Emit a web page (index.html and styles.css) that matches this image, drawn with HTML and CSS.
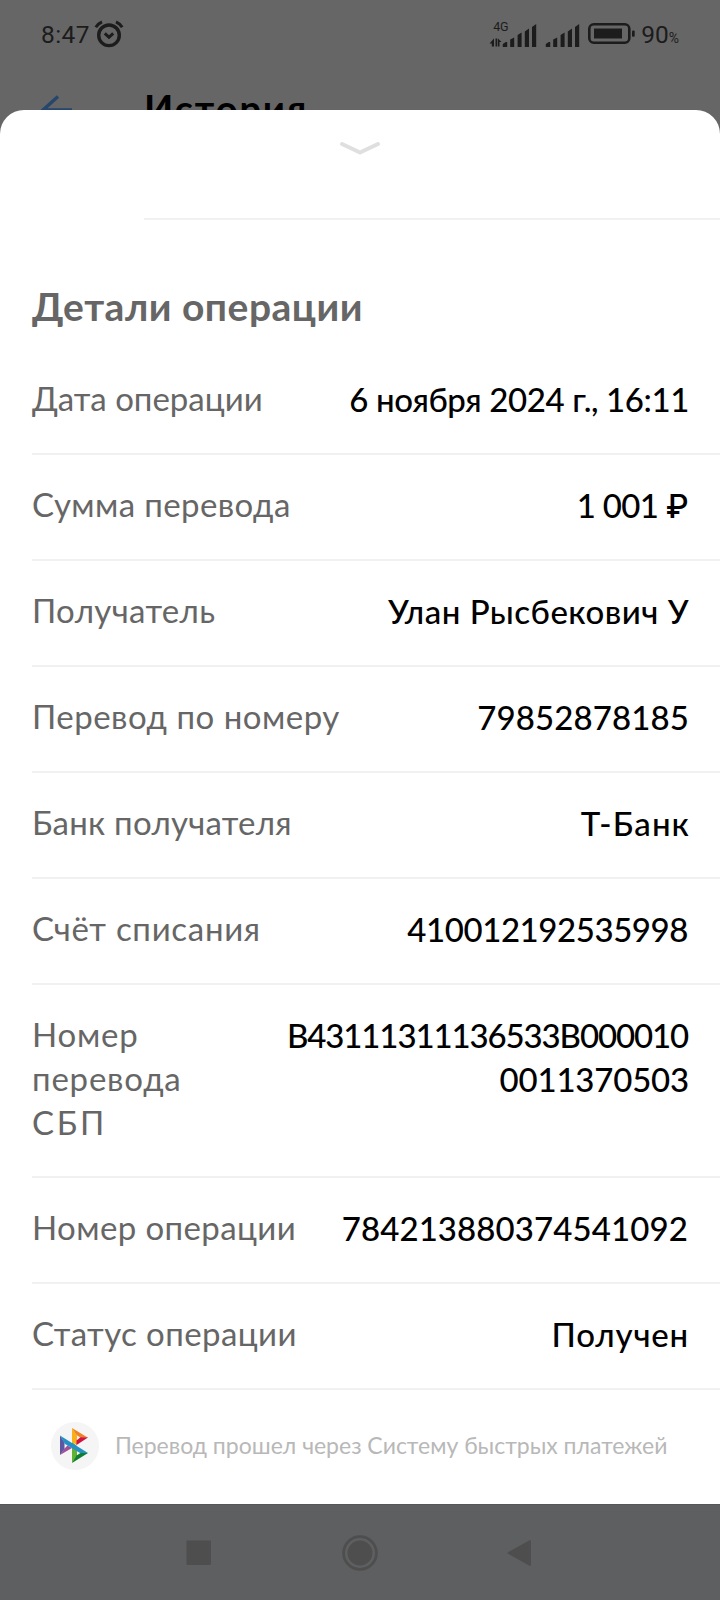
FILE: index.html
```html
<!DOCTYPE html>
<html lang="ru">
<head>
<meta charset="utf-8">
<title>История</title>
<link rel="stylesheet" href="styles.css">
</head>
<body>
<div class="screen">
  <header class="status">
    <span class="clock">8:47</span>
    <svg class="alarm" width="30" height="28" viewBox="0 0 30 28" fill="none" stroke="#1c1c1c" stroke-width="3.400">
      <circle cx="15" cy="15.300" r="10.300"/>
      <path d="M10.800 13.300l4.200 4 4.200-4" stroke-width="3"/>
      <path d="M1.800 7.200C3.400 4.600 5.400 2.900 8 1.800M28.200 7.200C26.600 4.600 24.600 2.900 22 1.800" stroke-width="3"/>
    </svg>
    <span class="network">
      <span class="net">4G</span>
      <svg width="94" height="11" viewBox="0 12.500 94 11" fill="#1c1c1c" overflow="visible">
        <path d="M5 15v8H2.800v-3H.5zM6.500 15h1.800v8H6.500zM9 15l3.500 3.500h-2V23H9z"/>
        <path d="M13.800 23.500v-3l3-2h1.400v5zM21.200 23.500v-7.500l4-2v9.500zM28.600 23.500v-12l4-2.500v14.500zM35.800 23.500v-15.500l4.200-3v18.500zM43 23.500V3.500l4.200-3v23z"/>
        <path transform="translate(43 0)" d="M13.800 23.500v-3l3-2h1.400v5zM21.200 23.500v-7.500l4-2v9.500zM28.600 23.500v-12l4-2.500v14.500zM35.800 23.500v-15.500l4.200-3v18.500zM43 23.500V3.500l4.200-3v23z"/>
      </svg>
    </span>
    <svg class="battery" width="47" height="21" viewBox="0 0 47 21">
      <rect x="1.300" y="1.300" width="40" height="18.400" rx="4.500" fill="none" stroke="#1c1c1c" stroke-width="2.600"/>
      <rect x="6" y="5.500" width="28" height="10" fill="#1c1c1c"/>
      <rect x="44" y="7.400" width="2.700" height="6.400" rx="1" fill="#1c1c1c"/>
    </svg>
    <span class="charge">90<small>%</small></span>
  </header>
  <div class="topbar">
    <svg class="back" width="31" height="30" viewBox="0 0 31 30" fill="none" stroke="#26466c" stroke-width="3.400"><path d="M17 1.500L2 15l15 13.500M2 15h29"/></svg>
    <h1 class="title">История</h1>
  </div>
  <main class="sheet">
    <svg class="grip" width="42" height="15" viewBox="0 0 42 15" fill="none" stroke="#dfdfdf" stroke-width="4" stroke-linecap="round" stroke-linejoin="round"><path d="M3 3l18 8.500L39 3"/></svg>
    <hr class="rule">
    <h2 class="heading">Детали операции</h2>
    <dl class="list">
      <div class="row date"><dt>Дата операции</dt><dd>6 ноября 2024 г., 16:11</dd></div>
      <div class="row amount"><dt>Сумма перевода</dt><dd>1 001 <span class="ruble">₽</span></dd></div>
      <div class="row payee"><dt>Получатель</dt><dd>Улан Рысбекович У</dd></div>
      <div class="row phone"><dt>Перевод по номеру</dt><dd>79852878185</dd></div>
      <div class="row bank"><dt>Банк получателя</dt><dd>Т-Банк</dd></div>
      <div class="row account"><dt>Счёт списания</dt><dd>410012192535998</dd></div>
      <div class="row sbp"><dt>Номер перевода <span class="abbr">СБП</span></dt><dd><span class="part">B43111311136533B000010</span><span class="rest">0011370503</span></dd></div>
      <div class="row number"><dt>Номер операции</dt><dd>784213880374541092</dd></div>
      <div class="row state"><dt>Статус операции</dt><dd>Получен</dd></div>
    </dl>
    <footer class="note">
      <svg width="48" height="48" viewBox="0 0 48 48">
        <circle cx="24" cy="24" r="24" fill="#f5f5f5"/>
        <path fill="#5b57a2" d="M9 13.500l4.500 7V27L9 33z"/>
        <path fill="#a0509b" d="M9 33l4.500-6.500 3-3L21 26z"/>
        <path fill="#faaf19" d="M21 6l5 7.500V23l-5-3z"/>
        <path fill="#f08228" d="M21 6l16 9.800h-7.500L25.500 13z"/>
        <path fill="#d21341" d="M37 15.500l-11.500 7.500v-4.500l4-3.200z"/>
        <path fill="#63b22f" d="M21 20l5 4v9.500L21 41z"/>
        <path fill="#0f7e30" d="M21 41l16-10h-7.500l-4 2.500z"/>
        <path fill="#2690c4" d="M9 13.500L37 31h-8L14 22z"/>
      </svg>
      <p>Перевод прошел через Систему быстрых платежей</p>
    </footer>
  </main>
  <nav class="nav">
    <svg width="26" height="26" viewBox="0 0 26 26"><rect x=".5" y=".5" width="24.500" height="24.500" rx="1" fill="#4e4e4e"/></svg>
    <svg width="36" height="36" viewBox="0 0 36 36" fill="#4e4e4e"><circle cx="18" cy="18" r="16.400" fill="none" stroke="#4e4e4e" stroke-width="2.800"/><circle cx="18" cy="18" r="12.500"/></svg>
    <svg width="25" height="28" viewBox="0 0 25 28"><path d="M1.500 14L23 2v24z" fill="#4e4e4e" stroke="#4e4e4e" stroke-width="2" stroke-linejoin="round"/></svg>
  </nav>
</div>
</body>
</html>
```
FILE: styles.css
```css
* { box-sizing: border-box; margin: 0; padding: 0; }

body { background: #666; font-family: Lato, "Open Sans", sans-serif; }

svg { display: block; flex: none; }

.screen { width: 720px; height: 1600px; display: flex; flex-direction: column; overflow: hidden; background: #666; }

/* Status bar */
.status { height: 80px; padding: 0 41px; display: flex; align-items: flex-start; color: #1c1c1c; font: 24px/28px Roboto, sans-serif; }
.clock { width: 53px; margin-top: 21px; font-size: 24.5px; letter-spacing: .4px; }
.alarm { margin-top: 20px; }
.network { width: 94px; margin: 19px 0 0 auto; display: flex; flex-direction: column; }
.net { height: 17px; padding-left: 4px; font-size: 12.5px; line-height: 16px; letter-spacing: -.3px; }
.battery { margin: 23px 0 0 5px; }
.charge { margin: 21px 0 0 6px; font-size: 24.5px; white-space: nowrap; }
.charge small { font-size: 14px; }

/* Bar under the sheet */
.topbar { height: 30px; padding-left: 41px; display: flex; align-items: flex-start; }
.back { margin-top: 15px; }
.title { margin: 5px 0 0 72px; font-size: 38px; line-height: 46px; font-weight: 700; letter-spacing: 1.900px; color: #000; }

/* Sheet */
.sheet { position: relative; height: 1394px; flex: none; background: #fff; border-radius: 24px 24px 0 0; display: flex; flex-direction: column; }
.grip { margin: 31px auto 0; }
.rule { width: 576px; height: 2px; margin: 62px 0 0 144px; border: 0; background: #f1f1f2; }
.heading { margin: 62px 0 0 32px; height: 67px; font-size: 39px; line-height: 48px; font-weight: 700; letter-spacing: .5px; color: #666; }

.list { margin-left: 32px; }
.row { display: flex; justify-content: space-between; padding: 27px 32px 33px 0; border-bottom: 2px solid #f1f1f2; font-size: 33px; line-height: 44px; }
.row dt { color: #666; letter-spacing: .4px; white-space: nowrap; }
.row dd { height: 44px; position: relative; top: 1px; color: #000; font-weight: 500; text-align: right; white-space: nowrap; }

/* Tracking of each label and value */
.date dt { letter-spacing: 0; }
.date dd { letter-spacing: -.4px; margin-right: -1px; }
.amount dd { letter-spacing: -.7px; }
.ruble { font-family: Inter, sans-serif; font-size: 32px; }
.payee dt { letter-spacing: .35px; }
.payee dd { letter-spacing: .5px; margin-right: -1px; }
.phone dt { letter-spacing: .5px; }
.phone dd { letter-spacing: .1px; margin-right: -1px; }
.bank dt { letter-spacing: .25px; }
.bank dd { letter-spacing: 1.1px; margin-right: -2px; }
.account dt { letter-spacing: .7px; }
.account dd { letter-spacing: -.43px; }
.number dd { letter-spacing: .1px; }
.state dd { letter-spacing: .8px; margin-right: -1px; }

.sbp { padding-bottom: 32px; }
.sbp dt { width: 150px; letter-spacing: .8px; white-space: normal; }
.abbr { letter-spacing: 2.800px; }
.part, .rest { display: block; }
.part { letter-spacing: -1.120px; }
.rest { letter-spacing: -.2px; margin-right: -1px; }

/* Footnote */
.note { display: flex; align-items: center; padding: 32px 0 0 51px; }
.note p { margin: -3px 0 0 16px; font-size: 23px; line-height: 28px; letter-spacing: 0; color: #b8b8b8; white-space: nowrap; }

/* Navigation bar */
.nav { height: 96px; flex: none; display: flex; align-items: center; justify-content: space-between; padding: 1px 188px 0 186px; background: #5e5f60; border-top: 1px solid #565656; }
```
